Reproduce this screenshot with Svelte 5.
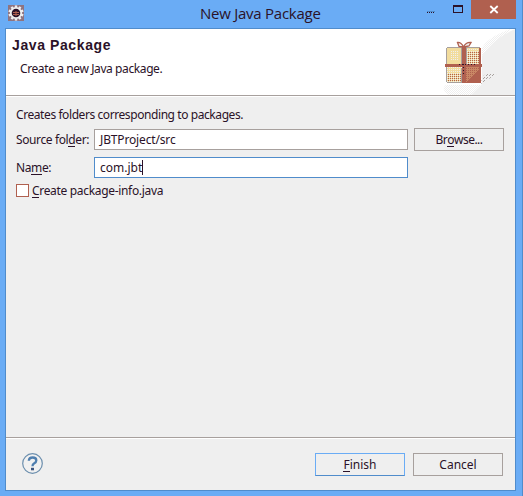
<script>
  const petals = Array.from({ length: 10 }, (_, i) => i * 36);
</script>

<div class="window">
  <header class="titlebar">
    <svg class="app" width="16" height="16" viewBox="0 0 16 16">
      <rect width="16" height="16" fill="#8f7480" />
      {#each petals as a}
        <rect x="6.8" y="0.4" width="2.4" height="4" fill="#efefef" transform="rotate({a} 8 8)" />
      {/each}
      <circle cx="8" cy="8" r="5.2" fill="#2b1228" stroke="#efefef" stroke-width="1.8" />
      <path d="M5 7.500h6M5 9.500h6M8 6v5" stroke="#b0604f" stroke-width="1" />
    </svg>
    <h1>New Java Package</h1>
    <div class="controls">
      <svg width="45" height="19" viewBox="0 0 45 19" shape-rendering="crispEdges">
        <path d="M1 11.5h8" stroke="#508ccb" />
        <path d="M1 12.5h8" stroke="#2b1228" stroke-dasharray="1 1" />
        <path d="M27 5h10v8h-10zM28 7v5h8v-5z" fill="#2b1228" fill-rule="evenodd" />
      </svg>
      <div class="close">
        <svg width="45" height="19" viewBox="0 0 45 19"><path d="M19.3 6l7.4 7M26.7 6l-7.4 7" stroke="#fff" stroke-width="1.8" /></svg>
      </div>
    </div>
  </header>
  <main>
    <section class="banner">
      <div>
        <h2>Java Package</h2>
        <p>Create a new Java package.</p>
      </div>
      <svg width="77" height="66" viewBox="438 29 77 66">
        <defs>
          <pattern id="dots" width="2" height="2" patternUnits="userSpaceOnUse">
            <rect width="1" height="1" fill="#b0604f" />
          </pattern>
          <pattern id="mist" width="2" height="2" patternUnits="userSpaceOnUse">
            <rect width="1" height="1" fill="#efefef" /><rect x="1" y="1" width="1" height="1" fill="#efefef" />
          </pattern>
          <pattern id="light" width="2" height="2" patternUnits="userSpaceOnUse">
            <rect x="1" y="1" width="1" height="1" fill="#efefef" />
          </pattern>
          <pattern id="shade" width="3" height="3" patternUnits="userSpaceOnUse">
            <rect width="1" height="1" fill="#a7a09d" /><rect x="1" y="2" width="1" height="1" fill="#a7a09d" />
          </pattern>
        </defs>
        <path d="M515 29Q493 39 482 56V84L471 95H515Z" fill="#efefef" />
        <path d="M511 29Q488 37 482 48V62L498 45Z" fill="url(#mist)" />
        <path d="M446 85H482L472 95H449Q440 89 446 85Z" fill="url(#mist)" />
        <path d="M482 77L487 73H498L481 84Z" fill="url(#shade)" />
        <g shape-rendering="crispEdges">
          <path d="M447 47h33v1h1v35h-34v-1h-1v-34h1z" fill="#a7a09d" />
          <rect x="447" y="48" width="34" height="34" fill="#f2dc9d" />
          <rect x="450" y="51" width="9" height="10" fill="url(#light)" />
          <rect x="466" y="48" width="13" height="16" fill="url(#light)" />
          <rect x="468" y="52" width="11" height="12" fill="url(#dots)" />
          <rect x="447" y="67" width="15" height="15" fill="url(#light)" />
          <rect x="448" y="73" width="14" height="9" fill="url(#dots)" />
          <rect x="466" y="67" width="14" height="15" fill="#c98765" />
          <rect x="466" y="67" width="14" height="15" fill="url(#dots)" />
          <path d="M466 82L479 69V82Z" fill="#b0604f" />
          <path d="M461.5 48v16M466.5 48v16M461.500 68v14" stroke="#a7a09d" />
          <rect x="462" y="47" width="4" height="36" fill="#b0604f" />
          <rect x="445" y="64" width="37" height="3" fill="#b0604f" />
          <path d="M479 48h2v35h-15v-1h13z" fill="#b0604f" />
          <path d="M459 64.500h16M463.500 64v10" stroke="#2b1228" stroke-dasharray="1 2" fill="none" />
        </g>
        <path d="M463.500 47Q461 42 457.500 42.500L459 46.500L463.500 47L469 46L471 42.500Q466 42 463.500 47" fill="#efefef" stroke="#b0604f" stroke-width="1.3" />
      </svg>
    </section>
    <section class="form">
      <p class="intro">Creates folders corresponding to packages.</p>
      <div class="row">
        <label for="src">Source fol<u>d</u>er:</label>
        <div id="src" class="field"><span class="path">JBTProject/src</span></div>
        <button><span class="browse">Br<u>o</u>wse...</span></button>
      </div>
      <div class="row">
        <label for="nm">Na<u>m</u>e:</label>
        <div id="nm" class="field active">com.jbt<i></i></div>
      </div>
      <div class="check"><b></b><span><u>C</u>reate package-info.java</span></div>
    </section>
    <footer>
      <svg width="22" height="22" viewBox="0 0 22 22">
        <circle cx="10.500" cy="10.500" r="9.800" fill="#f1f1f1" stroke="#6c8fae" stroke-width="1.2" />
        <path d="M6.800 7.800Q7 4.500 10.700 4.500Q14.300 4.500 14.300 7.500Q14.300 9.300 12 10.500Q10.500 11.300 10.500 13.300" fill="none" stroke="#4f7faf" stroke-width="2.300" />
        <rect x="9" y="14.800" width="3" height="2.500" fill="#3c5580" />
      </svg>
      <button class="default"><u>F</u>inish</button>
      <button>Cancel</button>
    </footer>
  </main>
</div>

<style>
  :global(body) { margin: 0; }
  * { box-sizing: border-box; }
  .window { width: 523px; height: 496px; background: #6aacf5; padding: 0 6px 5px 5px; border-right: 1px solid #508ccb; font: 12px/16px "Noto Sans", "Open Sans", sans-serif; color: #2b1228; display: flex; flex-direction: column; white-space: nowrap; overflow: hidden; }
  h1, h2, p { margin: 0; font-weight: 400; }
  u { text-decoration: none; background: linear-gradient(#2b1228, #2b1228) 0 14px / 100% 1px no-repeat; display: inline-block; height: 16px; line-height: 16px; vertical-align: top; }
  .titlebar { height: 28px; flex: none; display: flex; align-items: flex-start; }
  .app { margin: 5px 0 0 3px; }
  h1 { margin-left: 176px; width: 224px; font: 15px/27px "Open Sans", sans-serif; letter-spacing: -0.25px; }
  .controls { display: flex; margin-left: auto; }
  .controls svg { display: block; }
  .close { background: #b0604f; height: 19px; }
  main { flex: 1; border: 1px solid #508ccb; background: #efefef; display: flex; flex-direction: column; }
  .banner { height: 67px; flex: none; background: #fff; border-bottom: 1px solid #a7a09d; display: flex; justify-content: space-between; }
  .banner svg { display: block; }
  h2 { font: bold 14px/18px "Liberation Sans", sans-serif; letter-spacing: 0.6px; padding: 7px 0 0 6px; }
  .banner p { padding: 7px 0 0 14px; letter-spacing: -0.4px; }
  .form { border-top: 1px solid #fff; padding: 10px 11px 0 10px; flex: 1; }
  .intro { letter-spacing: -0.42px; }
  .row { display: flex; align-items: center; height: 23px; margin-top: 5px; }
  label { width: 78px; flex: none; letter-spacing: -0.38px; }
  .path { letter-spacing: -0.15px; }
  .browse { letter-spacing: -0.5px; }
  .field { width: 314px; flex: none; height: 21px; border: 1px solid #a7a09d; background: #fff; padding-left: 5px; display: flex; align-items: center; margin-right: 6px; }
  .active { border-color: #508ccb; }
  i { width: 1px; height: 15px; background: #2b1228; }
  button { width: 90px; flex: none; height: 23px; padding: 0; border: 1px solid #a7a09d; background: #efefef; font: inherit; color: inherit; }
  .check { display: flex; align-items: flex-start; margin-top: 4px; height: 16px; letter-spacing: -0.32px; }
  .check b { width: 13px; height: 13px; border: 1px solid #b0604f; background: #fff; margin: 1px 3px 0 0; }
  footer { height: 53px; border-top: 1px solid #a7a09d; box-shadow: inset 0 1px #fff; display: flex; gap: 8px; padding: 15px 12px 0 16px; }
  footer svg { margin-right: auto; }
  .default { border-color: #6aacf5; border-bottom-color: #508ccb; }
</style>
